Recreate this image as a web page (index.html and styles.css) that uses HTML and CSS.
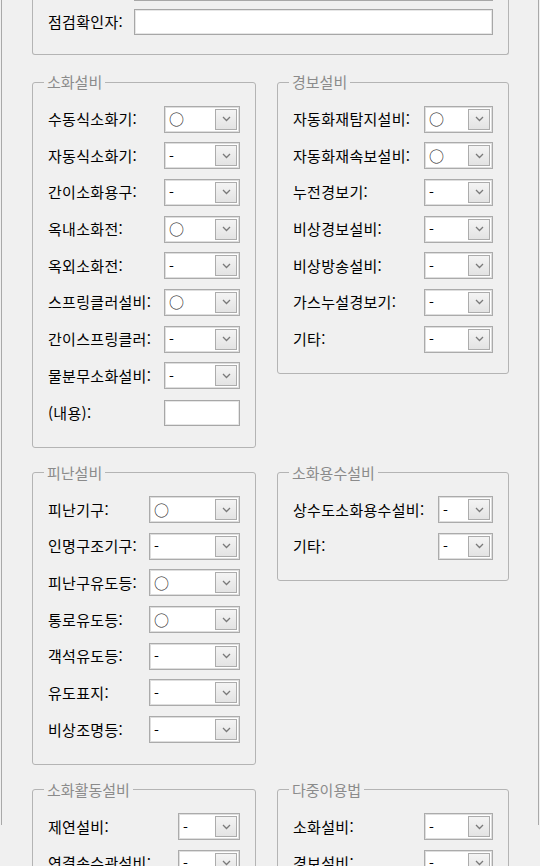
FILE: index.html
```html
<!DOCTYPE html>
<html lang="ko">
<head>
<meta charset="utf-8">
<title>점검</title>
<link rel="stylesheet" href="styles.css">
</head>
<body>
<div class="frame">
  <div class="top-group">
    <div class="row"><span class="label"></span><span class="textbox wide"></span></div>
    <div class="row"><span class="label">점검확인자:</span><span class="textbox wide"></span></div>
  </div>

  <div class="grid">
    <fieldset class="group" style="--cw:76px">
      <legend>소화설비</legend>
      <div class="row"><span class="label">수동식소화기:</span><span class="combo"><span class="val circ">○</span><span class="btn"><svg width="9" height="6" viewBox="0 0 9 6"><polyline points="1,1 4.5,4.5 8,1" fill="none" stroke="#7a7a7a" stroke-width="1.3"/></svg></span></span></div>
      <div class="row"><span class="label">자동식소화기:</span><span class="combo"><span class="val">-</span><span class="btn"><svg width="9" height="6" viewBox="0 0 9 6"><polyline points="1,1 4.5,4.5 8,1" fill="none" stroke="#7a7a7a" stroke-width="1.3"/></svg></span></span></div>
      <div class="row"><span class="label">간이소화용구:</span><span class="combo"><span class="val">-</span><span class="btn"><svg width="9" height="6" viewBox="0 0 9 6"><polyline points="1,1 4.5,4.5 8,1" fill="none" stroke="#7a7a7a" stroke-width="1.3"/></svg></span></span></div>
      <div class="row"><span class="label">옥내소화전:</span><span class="combo"><span class="val circ">○</span><span class="btn"><svg width="9" height="6" viewBox="0 0 9 6"><polyline points="1,1 4.5,4.5 8,1" fill="none" stroke="#7a7a7a" stroke-width="1.3"/></svg></span></span></div>
      <div class="row"><span class="label">옥외소화전:</span><span class="combo"><span class="val">-</span><span class="btn"><svg width="9" height="6" viewBox="0 0 9 6"><polyline points="1,1 4.5,4.5 8,1" fill="none" stroke="#7a7a7a" stroke-width="1.3"/></svg></span></span></div>
      <div class="row"><span class="label">스프링클러설비:</span><span class="combo"><span class="val circ">○</span><span class="btn"><svg width="9" height="6" viewBox="0 0 9 6"><polyline points="1,1 4.5,4.5 8,1" fill="none" stroke="#7a7a7a" stroke-width="1.3"/></svg></span></span></div>
      <div class="row"><span class="label">간이스프링클러:</span><span class="combo"><span class="val">-</span><span class="btn"><svg width="9" height="6" viewBox="0 0 9 6"><polyline points="1,1 4.5,4.5 8,1" fill="none" stroke="#7a7a7a" stroke-width="1.3"/></svg></span></span></div>
      <div class="row"><span class="label">물분무소화설비:</span><span class="combo"><span class="val">-</span><span class="btn"><svg width="9" height="6" viewBox="0 0 9 6"><polyline points="1,1 4.5,4.5 8,1" fill="none" stroke="#7a7a7a" stroke-width="1.3"/></svg></span></span></div>
      <div class="row"><span class="label">(내용):</span><span class="textbox cw"></span></div>
    </fieldset>

    <fieldset class="group" style="--cw:69px">
      <legend>경보설비</legend>
      <div class="row"><span class="label">자동화재탐지설비:</span><span class="combo"><span class="val circ">○</span><span class="btn"><svg width="9" height="6" viewBox="0 0 9 6"><polyline points="1,1 4.5,4.5 8,1" fill="none" stroke="#7a7a7a" stroke-width="1.3"/></svg></span></span></div>
      <div class="row"><span class="label">자동화재속보설비:</span><span class="combo"><span class="val circ">○</span><span class="btn"><svg width="9" height="6" viewBox="0 0 9 6"><polyline points="1,1 4.5,4.5 8,1" fill="none" stroke="#7a7a7a" stroke-width="1.3"/></svg></span></span></div>
      <div class="row"><span class="label">누전경보기:</span><span class="combo"><span class="val">-</span><span class="btn"><svg width="9" height="6" viewBox="0 0 9 6"><polyline points="1,1 4.5,4.5 8,1" fill="none" stroke="#7a7a7a" stroke-width="1.3"/></svg></span></span></div>
      <div class="row"><span class="label">비상경보설비:</span><span class="combo"><span class="val">-</span><span class="btn"><svg width="9" height="6" viewBox="0 0 9 6"><polyline points="1,1 4.5,4.5 8,1" fill="none" stroke="#7a7a7a" stroke-width="1.3"/></svg></span></span></div>
      <div class="row"><span class="label">비상방송설비:</span><span class="combo"><span class="val">-</span><span class="btn"><svg width="9" height="6" viewBox="0 0 9 6"><polyline points="1,1 4.5,4.5 8,1" fill="none" stroke="#7a7a7a" stroke-width="1.3"/></svg></span></span></div>
      <div class="row"><span class="label">가스누설경보기:</span><span class="combo"><span class="val">-</span><span class="btn"><svg width="9" height="6" viewBox="0 0 9 6"><polyline points="1,1 4.5,4.5 8,1" fill="none" stroke="#7a7a7a" stroke-width="1.3"/></svg></span></span></div>
      <div class="row"><span class="label">기타:</span><span class="combo"><span class="val">-</span><span class="btn"><svg width="9" height="6" viewBox="0 0 9 6"><polyline points="1,1 4.5,4.5 8,1" fill="none" stroke="#7a7a7a" stroke-width="1.3"/></svg></span></span></div>
    </fieldset>

    <fieldset class="group" style="--cw:91px">
      <legend>피난설비</legend>
      <div class="row"><span class="label">피난기구:</span><span class="combo"><span class="val circ">○</span><span class="btn"><svg width="9" height="6" viewBox="0 0 9 6"><polyline points="1,1 4.5,4.5 8,1" fill="none" stroke="#7a7a7a" stroke-width="1.3"/></svg></span></span></div>
      <div class="row"><span class="label">인명구조기구:</span><span class="combo"><span class="val">-</span><span class="btn"><svg width="9" height="6" viewBox="0 0 9 6"><polyline points="1,1 4.5,4.5 8,1" fill="none" stroke="#7a7a7a" stroke-width="1.3"/></svg></span></span></div>
      <div class="row"><span class="label">피난구유도등:</span><span class="combo"><span class="val circ">○</span><span class="btn"><svg width="9" height="6" viewBox="0 0 9 6"><polyline points="1,1 4.5,4.5 8,1" fill="none" stroke="#7a7a7a" stroke-width="1.3"/></svg></span></span></div>
      <div class="row"><span class="label">통로유도등:</span><span class="combo"><span class="val circ">○</span><span class="btn"><svg width="9" height="6" viewBox="0 0 9 6"><polyline points="1,1 4.5,4.5 8,1" fill="none" stroke="#7a7a7a" stroke-width="1.3"/></svg></span></span></div>
      <div class="row"><span class="label">객석유도등:</span><span class="combo"><span class="val">-</span><span class="btn"><svg width="9" height="6" viewBox="0 0 9 6"><polyline points="1,1 4.5,4.5 8,1" fill="none" stroke="#7a7a7a" stroke-width="1.3"/></svg></span></span></div>
      <div class="row"><span class="label">유도표지:</span><span class="combo"><span class="val">-</span><span class="btn"><svg width="9" height="6" viewBox="0 0 9 6"><polyline points="1,1 4.5,4.5 8,1" fill="none" stroke="#7a7a7a" stroke-width="1.3"/></svg></span></span></div>
      <div class="row"><span class="label">비상조명등:</span><span class="combo"><span class="val">-</span><span class="btn"><svg width="9" height="6" viewBox="0 0 9 6"><polyline points="1,1 4.5,4.5 8,1" fill="none" stroke="#7a7a7a" stroke-width="1.3"/></svg></span></span></div>
    </fieldset>

    <fieldset class="group" style="--cw:55px">
      <legend>소화용수설비</legend>
      <div class="row"><span class="label">상수도소화용수설비:</span><span class="combo"><span class="val">-</span><span class="btn"><svg width="9" height="6" viewBox="0 0 9 6"><polyline points="1,1 4.5,4.5 8,1" fill="none" stroke="#7a7a7a" stroke-width="1.3"/></svg></span></span></div>
      <div class="row"><span class="label">기타:</span><span class="combo"><span class="val">-</span><span class="btn"><svg width="9" height="6" viewBox="0 0 9 6"><polyline points="1,1 4.5,4.5 8,1" fill="none" stroke="#7a7a7a" stroke-width="1.3"/></svg></span></span></div>
    </fieldset>

    <fieldset class="group" style="--cw:62px">
      <legend>소화활동설비</legend>
      <div class="row"><span class="label">제연설비:</span><span class="combo"><span class="val">-</span><span class="btn"><svg width="9" height="6" viewBox="0 0 9 6"><polyline points="1,1 4.5,4.5 8,1" fill="none" stroke="#7a7a7a" stroke-width="1.3"/></svg></span></span></div>
      <div class="row"><span class="label">연결송수관설비:</span><span class="combo"><span class="val">-</span><span class="btn"><svg width="9" height="6" viewBox="0 0 9 6"><polyline points="1,1 4.5,4.5 8,1" fill="none" stroke="#7a7a7a" stroke-width="1.3"/></svg></span></span></div>
      <div class="row"><span class="label">연결살수설비:</span><span class="combo"><span class="val">-</span><span class="btn"><svg width="9" height="6" viewBox="0 0 9 6"><polyline points="1,1 4.5,4.5 8,1" fill="none" stroke="#7a7a7a" stroke-width="1.3"/></svg></span></span></div>
    </fieldset>

    <fieldset class="group" style="--cw:69px">
      <legend>다중이용법</legend>
      <div class="row"><span class="label">소화설비:</span><span class="combo"><span class="val">-</span><span class="btn"><svg width="9" height="6" viewBox="0 0 9 6"><polyline points="1,1 4.5,4.5 8,1" fill="none" stroke="#7a7a7a" stroke-width="1.3"/></svg></span></span></div>
      <div class="row"><span class="label">경보설비:</span><span class="combo"><span class="val">-</span><span class="btn"><svg width="9" height="6" viewBox="0 0 9 6"><polyline points="1,1 4.5,4.5 8,1" fill="none" stroke="#7a7a7a" stroke-width="1.3"/></svg></span></span></div>
      <div class="row"><span class="label">피난설비:</span><span class="combo"><span class="val">-</span><span class="btn"><svg width="9" height="6" viewBox="0 0 9 6"><polyline points="1,1 4.5,4.5 8,1" fill="none" stroke="#7a7a7a" stroke-width="1.3"/></svg></span></span></div>
    </fieldset>
  </div>
</div>
</body>
</html>
```

FILE: styles.css
```css
html, body {
  margin: 0;
  padding: 0;
  height: 866px;
  overflow: hidden;
  background: #f0f0f0;
}
body {
  font-family: "Noto Sans CJK KR", "Noto Sans", sans-serif;
  font-size: 15px;
  color: #000;
}
.frame {
  box-sizing: border-box;
  margin-left: 1px;
  width: 538px;
  height: 866px;
  border-left: 1px solid #a9a9a9;
  border-right: 1px solid #a9a9a9;
  padding: 0 28px 0 30px;
}
.top-group {
  box-sizing: border-box;
  width: 477px;
  margin-top: -41px;
  padding: 16px 15px 19px;
  border: 1px solid #b4b4b4;
  border-top: none;
  border-radius: 0 0 3px 3px;
  display: flex;
  flex-direction: column;
  gap: 8px;
  margin-bottom: 17px;
}
.grid {
  display: grid;
  grid-template-columns: 224px 232px;
  column-gap: 21px;
  row-gap: 15px;
  align-items: start;
}
.group {
  margin: 0;
  min-width: 0;
  padding: 14px 15px 21px;
  border: 1px solid #b4b4b4;
  border-radius: 3px;
  display: flex;
  flex-direction: column;
  gap: 10.7px;
}
.group legend {
  margin-left: -4px;
  padding: 0 3px;
  line-height: 20px;
  color: #8b8b8b;
}
.row {
  display: flex;
  align-items: center;
  height: 26px;
}
.label {
  flex: 1 1 auto;
  white-space: nowrap;
  line-height: 26px;
  letter-spacing: 0.3px;
}
.textbox {
  box-sizing: border-box;
  height: 26px;
  background: #fff;
  border: 1px solid #a7a7a7;
  box-shadow: inset 0 0 0 1px #e6e6e6;
  flex: none;
}
.textbox.wide {
  width: 359px;
}
.textbox.cw {
  width: var(--cw);
}
.combo {
  box-sizing: border-box;
  flex: none;
  width: var(--cw);
  height: 27px;
  background: #fff;
  border: 1px solid #ababab;
  box-shadow: inset 0 0 0 1px #dedede;
  display: flex;
  align-items: center;
  padding: 2px;
}
.val {
  flex: 1 1 auto;
  padding-left: 2px;
  line-height: 20px;
  font-size: 14px;
}
.val.circ {
  font-size: 15px;
  padding-left: 2px;
  color: #222;
}
.btn {
  box-sizing: border-box;
  flex: none;
  width: 22px;
  height: 21px;
  border: 1px solid #acacac;
  background: linear-gradient(#f4f4f4, #e3e3e3);
  display: flex;
  align-items: center;
  justify-content: center;
}
.btn svg {
  display: block;
}
```
